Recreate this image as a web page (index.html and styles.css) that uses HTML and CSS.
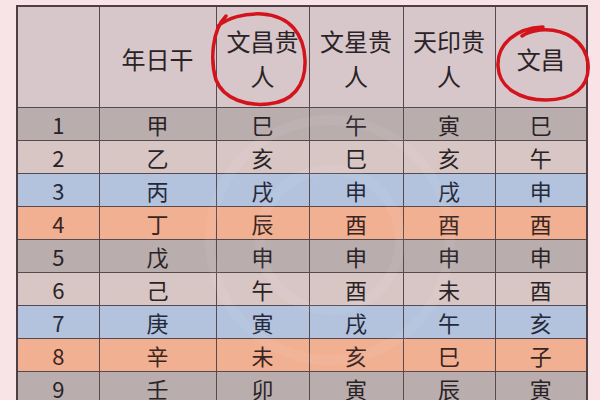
FILE: index.html
```html
<!DOCTYPE html>
<html lang="zh">
<head>
<meta charset="utf-8">
<link rel="stylesheet" href="styles.css">
</head>
<body>
<div class="page">
  <table class="grid">
    <colgroup>
      <col class="c-num"><col class="c-gan"><col class="c-a"><col class="c-b"><col class="c-c"><col class="c-d">
    </colgroup>
    <thead>
      <tr class="head">
        <th></th>
        <th>年日干</th>
        <th>文昌贵<br>人</th>
        <th>文星贵<br>人</th>
        <th>天印贵<br>人</th>
        <th>文昌</th>
      </tr>
    </thead>
    <tbody>
      <tr class="r-grey"><td>1</td><td>甲</td><td>巳</td><td>午</td><td>寅</td><td>巳</td></tr>
      <tr class="r-light"><td>2</td><td>乙</td><td>亥</td><td>巳</td><td>亥</td><td>午</td></tr>
      <tr class="r-blue"><td>3</td><td>丙</td><td>戌</td><td>申</td><td>戌</td><td>申</td></tr>
      <tr class="r-orange"><td>4</td><td>丁</td><td>辰</td><td>酉</td><td>酉</td><td>酉</td></tr>
      <tr class="r-grey"><td>5</td><td>戊</td><td>申</td><td>申</td><td>申</td><td>申</td></tr>
      <tr class="r-light"><td>6</td><td>己</td><td>午</td><td>酉</td><td>未</td><td>酉</td></tr>
      <tr class="r-blue"><td>7</td><td>庚</td><td>寅</td><td>戌</td><td>午</td><td>亥</td></tr>
      <tr class="r-orange"><td>8</td><td>辛</td><td>未</td><td>亥</td><td>巳</td><td>子</td></tr>
      <tr class="r-grey"><td>9</td><td>壬</td><td>卯</td><td>寅</td><td>辰</td><td>寅</td></tr>
    </tbody>
  </table>
  <svg class="marks" width="600" height="400" viewBox="0 0 600 400">
    <g fill="none" stroke="#ffffff" stroke-opacity="0.06" stroke-width="10">
      <circle cx="330" cy="240" r="120"/>
      <circle cx="330" cy="240" r="70"/>
    </g>
    <path class="ring" d="M226 16 C 212 30, 210 60, 216 80 C 224 100, 248 106, 268 104 C 292 102, 306 86, 305 60 C 304 34, 290 16, 262 14 C 244 13, 228 18, 218 26"/>
    <path class="ring" d="M543 27 C 516 28, 497 44, 498 66 C 499 88, 520 100, 546 100 C 572 100, 590 88, 588 64 C 586 42, 566 28, 540 30 C 532 31, 526 33, 522 36"/>
  </svg>
</div>
</body>
</html>
```

FILE: styles.css
```css
html, body {
  margin: 0;
  padding: 0;
  background: #f8e4e6;
}
.page {
  position: relative;
  width: 600px;
  height: 400px;
  overflow: hidden;
  padding: 5px 0 0 16px;
  box-sizing: border-box;
}
.grid {
  border-collapse: collapse;
  table-layout: fixed;
  width: 570px;
  font-family: "Noto Sans CJK SC", "Noto Sans", sans-serif;
  color: #2a2326;
  border: 2px solid #4d3f43;
}
.c-num { width: 82px; }
.c-gan { width: 117px; }
.c-a { width: 93px; }
.c-b { width: 94px; }
.c-c { width: 92px; }
.c-d { width: 92px; }
.grid th, .grid td {
  border: 1.5px solid #554a4d;
  text-align: center;
  vertical-align: middle;
  padding: 0;
}
.head th {
  height: 98px;
  background: #d7c7ca;
  font-weight: 400;
  font-size: 24px;
  line-height: 35px;
  padding-top: 2px;
}
.grid td {
  height: 32px;
  font-size: 22px;
  line-height: 28px;
}
.r-grey td { background: #b9adae; }
.r-light td { background: #d8c6c5; }
.r-blue td { background: #b3c3dd; color: #26293a; }
.r-orange td { background: #f2b092; color: #3a2520; }
.marks {
  position: absolute;
  left: 0;
  top: 0;
  pointer-events: none;
}
.ring {
  fill: none;
  stroke: #d4141c;
  stroke-width: 3.5;
  stroke-linecap: round;
}
```
